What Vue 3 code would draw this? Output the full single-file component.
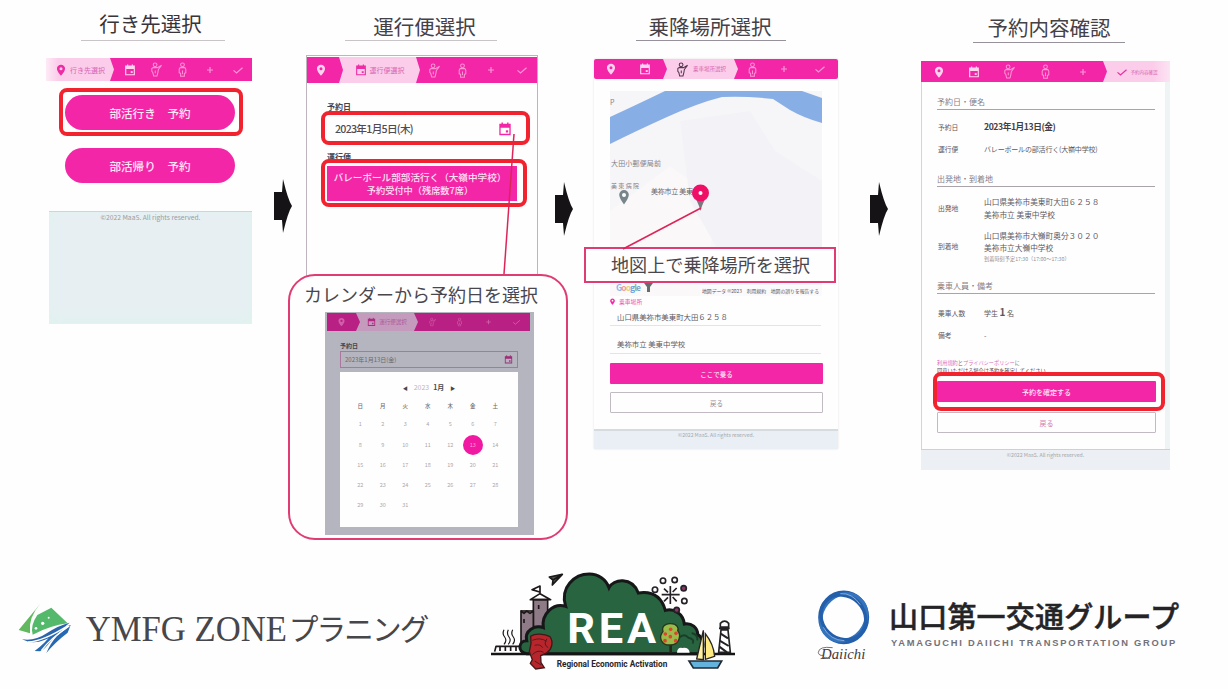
<script setup>
import { h } from 'vue'

const icons = ['pin', 'cal', 'ride', 'man', 'plus', 'check']

// Progress bar on top of every screen; one step is expanded with its label.
const StepBar = (props) =>
  h('div', { class: ['stepbar', props.kind] },
    icons.map((name, i) =>
      h('div', { class: ['cell', i === props.active ? 'on' : ''] }, [
        h('svg', { class: ['ico', name], viewBox: '0 0 16 16' }, [h('use', { href: '#i-' + name })]),
        i === props.active ? h('span', props.label) : null
      ])
    )
  )
StepBar.props = ['kind', 'active', 'label']

const weekdays = ['日', '月', '火', '水', '木', '金', '土']
const days = [1, 2, 3, 4, 5, 6, 7, 8, 9, 10, 11, 12, 13, 14, 15, 16, 17, 18, 19, 20, 21, 22, 23, 24, 25, 26, 27, 28, 29, 30, 31]
const waves = [0, 13, 26]
const fruits = [[572, 208], [556, 222], [588, 220], [571, 230], [555, 242], [587, 242]]
</script>

<template>
  <div class="page">
    <svg class="defs" width="0" height="0">
      <symbol id="i-pin" viewBox="0 0 16 16"><path fill="currentColor" fill-rule="evenodd" d="M8 1C4.8 1 2.6 3.3 2.6 6.2 2.6 10 8 15.5 8 15.5S13.4 10 13.4 6.2C13.4 3.3 11.2 1 8 1Zm0 3.2a2 2 0 1 1 0 4 2 2 0 0 1 0-4Z" /></symbol>
      <symbol id="i-cal" viewBox="0 0 16 16"><path fill="currentColor" fill-rule="evenodd" d="M1.500 2H4V.5h1.600V2h4.800V.5H12V2h2.500v13h-13ZM3 6.500v7h10v-7Z" /><path fill="currentColor" d="M9 9.500h2.600v2.500H9Z" /></symbol>
      <symbol id="i-ride" viewBox="0 0 16 16"><g fill="none" stroke="currentColor" stroke-width="1.100"><circle cx="6.500" cy="3" r="2" /><path d="M4 6h5l4.500-2.500M13.500 3.500 10 8l-.5 3-1 4H5L4 11 3 10V7l1-1" /><path d="M6.700 9v3" /></g></symbol>
      <symbol id="i-man" viewBox="0 0 16 16"><g fill="none" stroke="currentColor" stroke-width="1.100"><circle cx="8" cy="3" r="2" /><path d="M5.500 6h5l1 1.500v4L10 12v3.300H6V12l-1.500-.5v-4Z" /><path d="M8 9v4" /></g></symbol>
      <symbol id="i-plus" viewBox="0 0 16 16"><path fill="none" stroke="currentColor" stroke-width="1.600" d="M8 4v8M4 8h8" /></symbol>
      <symbol id="i-check" viewBox="0 0 16 16"><path fill="none" stroke="currentColor" stroke-width="1.600" d="M2 8.500l4 3.500 8-7" /></symbol>
    </svg>

    <main class="flow">
      <section class="step s1">
        <h2>行き先選択</h2>
        <div class="screen">
          <StepBar kind="b1" :active="0" label="行き先選択" />
          <button class="pill hl"><i></i>部活行き　予約</button>
          <button class="pill">部活帰り　予約</button>
          <div class="foot"><span>©2022 MaaS. All rights reserved.</span></div>
        </div>
      </section>

      <svg class="arrow a1" viewBox="0 0 18 54"><path d="M0 13H8L9 0Q14 21 18 27 14 33 9 54L8 41H0Z" /></svg>

      <section class="step s2">
        <h2>運行便選択</h2>
        <div class="screen">
          <StepBar kind="b2" :active="1" label="運行便選択" />
          <label>予約日</label>
          <div class="date hl"><i></i>2023年1月5日(木)<svg viewBox="0 0 16 16"><use href="#i-cal" /></svg></div>
          <label>運行便</label>
          <button class="bus hl"><i></i><span>バレーボール部部活行く（大嶺中学校）<br><b>予約受付中（残席数7席）</b></span></button>
        </div>
        <div class="callout cal">
          <p>カレンダーから予約日を選択</p>
          <div class="dim">
            <StepBar kind="b5" :active="1" label="運行便選択" />
            <label>予約日</label>
            <div class="dfield">2023年1月13日(金)<svg viewBox="0 0 16 16"><use href="#i-cal" /></svg></div>
            <div class="picker">
              <div class="month"><i>◀</i><span>2023</span><b>1月</b><i>▶</i></div>
              <div class="grid">
                <b v-for="w in weekdays" :key="w">{{ w }}</b>
                <span v-for="d in days" :key="d" :class="{ sel: d === 13 }">{{ d }}</span>
              </div>
            </div>
          </div>
        </div>
        <svg class="lead l1" viewBox="0 0 14 142"><path d="M12 1L2 141" /></svg>
      </section>

      <svg class="arrow a2" viewBox="0 0 18 54"><path d="M0 13H8L9 0Q14 21 18 27 14 33 9 54L8 41H0Z" /></svg>

      <section class="step s3">
        <h2>乗降場所選択</h2>
        <div class="screen">
          <StepBar kind="b3" :active="2" label="乗車場所選択" />
          <svg class="map" viewBox="0 0 212 205">
            <rect width="212" height="205" fill="#f6f5f8" />
            <path d="M0 120L60 75 110 110 90 205H0Z" fill="#faf8f8" />
            <path d="M70 30L140 20 165 60 212 90V160L120 180 80 110Z" fill="#f3f3f7" />
            <path d="M0 26Q26 14 55 0H192L212 7V32Q194 27 180 19L163 8Q137 5 112 6 88 12 57 26T0 53Z" fill="#88aee6" />
            <g fill="#85828a" font-size="7">
              <text x="0" y="14">P</text>
              <text x="1" y="75" textLength="50">大田小郵便局前</text>
              <text x="1" y="97" font-size="6" textLength="28">美東病院</text>
              <text x="41" y="103" fill="#68646c" textLength="42">美祢市立 美東</text>
            </g>
            <path d="M14 99a4.800 4.800 0 0 1 4.800 4.800Q18.800 107 14 113.500 9.200 107 9.200 103.800A4.800 4.800 0 0 1 14 99Z" fill="#77868c" /><circle cx="14" cy="104" r="2" fill="#fff" />
            <path d="M86 108h9l-3 7-1.500 5-1.500-5Z" fill="#7c7880" />
            <circle cx="90.500" cy="102" r="8.500" fill="#ef0f66" /><circle cx="90.500" cy="102" r="2" fill="#fff" />
            <g font-size="8.500" font-weight="bold" transform="translate(6 200)"><text textLength="25"><tspan fill="#8bb4ee">G</tspan><tspan fill="#ef9b9b">o</tspan><tspan fill="#e8cf75">o</tspan><tspan fill="#6e9fe2">g</tspan><tspan fill="#77bf8a">l</tspan><tspan fill="#7ca3c8">e</tspan></text></g>
            <path d="M34 192h9l-3 4v5h-3v-5Z" fill="#666b6b" />
            <rect x="90" y="194" width="122" height="11" fill="#faf9fb" />
            <text x="92" y="202" font-size="5" fill="#5c5760" textLength="117" lengthAdjust="spacingAndGlyphs">地図データ ©2023　利用規約　地図の誤りを報告する</text>
          </svg>
          <div class="from"><svg viewBox="0 0 16 16"><use href="#i-pin" /></svg>乗車場所</div>
          <div class="field f1">山口県美祢市美東町大田６２５８</div>
          <div class="field f2">美祢市立 美東中学校</div>
          <button class="solid">ここで乗る</button>
          <button class="line">戻る</button>
          <div class="foot"><span>©2022 MaaS. All rights reserved.</span></div>
        </div>
        <div class="callout place">地図上で乗降場所を選択</div>
        <svg class="lead l2" viewBox="0 0 80 43"><path d="M79 1L1 42" /></svg>
      </section>

      <svg class="arrow a3" viewBox="0 0 18 54"><path d="M0 13H8L9 0Q14 21 18 27 14 33 9 54L8 41H0Z" /></svg>

      <section class="step s4">
        <h2>予約内容確認</h2>
        <div class="screen">
          <StepBar kind="b4" :active="5" label="予約内容確認" />
          <div class="body">
            <h3>予約日・便名</h3>
            <dl class="d1"><dt>予約日</dt><dd class="strong">2023年1月13日(金)</dd></dl>
            <dl class="d2"><dt>運行便</dt><dd class="tight">バレーボールの部活行く(大嶺中学校)</dd></dl>
            <h3 class="h2nd">出発地・到着地</h3>
            <dl class="d3"><dt>出発地</dt><dd>山口県美祢市美東町大田６２５８<br>美祢市立 美東中学校</dd></dl>
            <dl class="d4"><dt>到着地</dt><dd>山口県美祢市大嶺町奥分３０２０<br>美祢市立大嶺中学校<small>到着時刻予定17:30（17:00〜17:30）</small></dd></dl>
            <h3 class="h3rd">乗車人員・備考</h3>
            <dl class="d5"><dt>乗車人数</dt><dd>学生 <b>1</b> 名</dd></dl>
            <dl class="d6"><dt>備考</dt><dd>-</dd></dl>
            <p class="terms"><a>利用規約</a>と<a>プライバシーポリシー</a>に<br><em>同意いただける場合は予約を確定してください。</em></p>
            <button class="solid hl"><i></i>予約を確定する</button>
            <button class="line">戻る</button>
          </div>
          <div class="foot"><span>©2022 MaaS. All rights reserved.</span></div>
        </div>
      </section>
    </main>

    <footer class="logos">
      <svg class="ymfg" viewBox="0 0 1350 327">
        <path d="M56 150L122 70Q84 112 90 160L64 152Z" fill="#61b85f" />
        <path d="M154 83L203 130Q150 137 98 164 90 137 112 105Z" fill="#55b96b" />
        <g fill="#fff"><circle cx="128" cy="130" r="5" /><circle cx="146" cy="113" r="3" /><circle cx="108" cy="145" r="4" /></g>
        <path d="M66 178Q105 184 140 160T209 128Q165 168 133 180 98 195 66 178Z" fill="#2b64ab" />
        <path d="M104 213Q137 188 150 168 181 137 213 135 171 157 151 185 133 209 120 214Z" fill="#2569b4" />
        <path d="M139 219Q151 190 171 168L212 135 203 158Q165 187 139 219Z" fill="#2569b4" />
        <path d="M84 186Q130 184 205 136M124 212Q150 176 208 138" fill="none" stroke="#fff" stroke-width="4" />
        <g fill="#46464b"><text x="257" y="183" class="serif" font-size="108" textLength="604" lengthAdjust="spacingAndGlyphs">YMFG ZONE</text><text x="866" y="181" font-size="89" textLength="422">プラニング</text></g>
      </svg>

      <svg class="rea" viewBox="0 0 810 387">
        <g fill="none" stroke="#1c1718" stroke-width="5" stroke-linejoin="round">
          <g fill="#8e7b87"><path d="M160 119V200H203V119Z" /><path d="M123 153V255H160V153L150 160 140 153 132 160Z" /></g>
          <path d="M151 119L180 101 212 119ZM180 101V78L156 89 179 96M132 177v12M176 135v12" />
          <path d="M122 153h40" />
          <path d="M208 51L247 43 217 75 219 60ZM247 43L219 60" fill="#48604f" />
          <path v-for="w in waves" :key="w" :d="`M${72 + w} 209q-6 12 2 22t-2 22`" stroke-width="3.500" />
          <path d="M44 275l4-16H135V275M60 259v14M76 259v14M92 259v14M108 259v14M124 259v14" />
        </g>
        <path d="M140 281C110 274 116 242 140 242 133 211 164 194 190 203 184 162 220 127 257 139 239 81 284 42 328 42 355 42 378 58 387 83 399 57 456 49 475 99 502 95 541 98 556 151 582 144 610 161 613 192 635 188 653 203 653 223 675 238 673 269 657 281Z" fill="#28643f" stroke="#161718" stroke-width="9" />
        <path d="M33 282H765" stroke="#151516" stroke-width="7" />
        <text class="reatext" fill="#fff" x="262" y="250" font-size="130" font-weight="bold" textLength="266">REA</text>
        <path d="M152 229C165 219 193 221 210 230 221 246 216 268 201 278L182 287 183 308 193 323 167 327 151 310 157 299 148 275 153 250Z" fill="#b8262b" stroke="#441719" stroke-width="4" />
        <path d="M157 241q24-10 43 3M164 256q17-5 24 7m13-27q-13 18 4 27M157 284q17-17 34-7M164 303l19 12" fill="none" stroke="#541c20" stroke-width="3" />
        <path d="M572 278V250" stroke="#29251b" stroke-width="8" />
        <path d="M572 191C592 191 597 205 593 212 606 228 596 255 572 255 542 257 535 230 549 215 544 199 557 190 572 191Z" fill="#9abd4a" stroke="#26351d" stroke-width="4" />
        <circle v-for="(f, n) in fruits" :key="n" :cx="f[0]" :cy="f[1]" r="5.500" fill="#df4430" />
        <path d="M591 278q1-17 16-14 20-3 22 14Z" fill="#fff" />
        <path d="M598 233q15-15 27 0 20 4 13 18M635 219q20 5 17 22" fill="none" stroke="#193e29" stroke-width="6" />
        <g fill="none" stroke="#242127" stroke-width="5">
          <path d="M571 78v17M571 113v19M545 104h17M580 104h19M552 86l12 11M578 111l12 13M552 124l12-12M578 96l12-12M571 95v18M562 104h18" />
          <circle cx="549" cy="62" r="8" /><circle cx="584" cy="60" r="8" /><circle cx="611" cy="85" r="8" fill="#8e3568" /><circle cx="613" cy="123" r="8" /><circle cx="525" cy="89" r="8" /><circle cx="590" cy="150" r="8" fill="#8e3568" />
        </g>
        <path d="M670 211V299L650 297Z" fill="#fff1a0" stroke="#262324" stroke-width="4" />
        <path d="M676 221Q701 253 704 289L676 298Z" fill="#ffeb82" stroke="#262324" stroke-width="4" />
        <path d="M627 303H725L713 324H640Z" fill="#63b3dc" stroke="#202c35" stroke-width="5" />
        <path d="M723 210H744L751 277H716ZM717 205h32M721 201V190q13-13 25 0v11Z" fill="#fff" stroke="#242124" stroke-width="5" />
        <path d="M722 221l22 14M719 242l27 16M718 260l23 17" stroke="#242124" stroke-width="6" />
        <text x="230" y="322" font-size="25" font-weight="bold" fill="#292629" class="reatext" textLength="332" lengthAdjust="spacingAndGlyphs">Regional Economic Activation</text>
      </svg>

      <svg class="daiichi" viewBox="0 0 1200 330">
        <g fill="none" stroke="#245fac">
          <ellipse cx="131" cy="142" rx="70" ry="74" stroke-width="13" />
          <ellipse cx="131" cy="142" rx="65" ry="74" stroke-width="10" transform="rotate(40 131 142)" stroke="#3474be" />
          <ellipse cx="130" cy="142" rx="63" ry="71" stroke-width="10" transform="rotate(-45 130 142)" />
        </g>
        <path d="M121 71q35-3 60 33M70 172q21 39 63 40" fill="none" stroke="#9bbce2" stroke-width="2.500" />
        <text x="63" y="266" class="script" font-size="43" textLength="133" lengthAdjust="spacingAndGlyphs" fill="#3e3a41">Daiichi</text>
        <path d="M98 233Q57 228 55 247 56 258 70 256M62 266q14-8 28 0" fill="none" stroke="#5b555b" stroke-width="2.500" />
        <text x="267" y="174" font-size="87" font-weight="500" textLength="870" fill="#242427" stroke="#242427" stroke-width="1.500">山口第一交通グループ</text>
        <text x="273" y="227" class="latin" font-size="28" font-weight="bold" textLength="853" fill="#737177">YAMAGUCHI DAIICHI TRANSPORTATION GROUP</text>
      </svg>
    </footer>
  </div>
</template>

<style>
html, body { margin: 0; background: #fffefe; overflow: hidden; }
.stepbar { display: grid; background: #f426a8; color: #ffd3ef; flex: none; box-sizing: border-box; }
.stepbar .cell { display: flex; align-items: center; justify-content: center; min-width: 0; white-space: nowrap; }
.stepbar .ico { width: 12px; height: 12px; flex: none; opacity: .65; }
.stepbar .pin, .stepbar .cal, .stepbar .on .ico { opacity: 1; }
.stepbar .ride, .stepbar .man { width: 15px; height: 17px; }
.stepbar .on { background: #fbcdea; color: #ee2ca4; gap: 3px; clip-path: polygon(0 0, calc(100% - 4px) 0, 100% 50%, calc(100% - 4px) 100%, 0 100%, 4px 50%); }
.stepbar .on span { font-size: 7px; color: #d965b1; }
.b1 { height: 23px; grid-template-columns: 68px 31px 23px 28px 28px 28px; }
.b1 .on { clip-path: polygon(0 0, calc(100% - 4px) 0, 100% 50%, calc(100% - 4px) 100%, 0 100%); background: linear-gradient(90deg, #fdebf6, #fbcdea 12px); }
.b2 { height: 26px; grid-template-columns: 32px 81px 28px 28px 30px 31px; }
.b2 .pin { margin-right: 4px; }
.b3 { height: 20px; grid-template-columns: 33px 36px 75px 28px 35px 37px; border-radius: 2px; }
.b3 .on span { font-size: 5.500px; }
.b3 .on .ico { color: #50354b; opacity: 1; }
.b4 { height: 21px; grid-template-columns: 35px 36px 35px 36px 40px 67px; }
.b4 .on span { font-size: 4.500px; }
.b4 .on { clip-path: polygon(0 0, 100% 0, 100% 100%, 0 100%, 4px 50%); background: linear-gradient(90deg, #fbcdea 75%, #fbe4f3); }
.b5 { height: 18px; grid-template-columns: 29px 62px 28px 27px 30px 27px; background: #b92084 !important; }
.b5 .ico { width: 9px !important; height: 10px !important; opacity: .35 !important; }
.b5 .on { background: #c49abd; color: #b11d7a; }
.b5 .on .ico { opacity: .9 !important; }
.b5 .on span { font-size: 5.500px; color: #ad5b99; }
</style>

<style scoped>
.page { width: 1228px; height: 689px; background: #fffefe; font-family: "Noto Sans CJK JP", sans-serif; color: #48454a; overflow: hidden; }
.defs { position: absolute; }
button { font: inherit; padding: 0; margin: 0; border: 0; display: block; box-sizing: border-box; text-align: center; }
h2, h3, p, dl, dd { margin: 0; }
.flow { display: flex; height: 560px; }
.step { position: relative; flex: none; }
.s1 { width: 206px; margin-left: 46px; }
.s2 { width: 232px; margin-left: 14px; }
.s3 { width: 244px; margin-left: 20px; }
.s4 { width: 249px; margin-left: 32px; }
h2 { font-size: 20.500px; font-weight: 400; text-align: center; line-height: 30px; box-sizing: border-box; height: 32px; margin: 9px auto 0; border-bottom: 1px solid #c9c4c8; white-space: nowrap; color: #444147; }
.s1 h2 { width: 144px; margin-left: 35px; padding-right: 5px; line-height: 28px; color: #38343a; }
.s2 h2 { width: 152px; margin-left: 39px; padding-left: 7px; line-height: 34px; }
.s3 h2 { width: 150px; margin-left: 42px; padding-right: 2px; line-height: 34px; border-color: #96919a; }
.s4 h2 { width: 152px; margin-left: 52px; height: 34px; line-height: 37px; border-color: #96919a; }
.arrow { width: 18px; height: 54px; flex: none; fill: #151316; }
.a1 { margin: 179px 0 0 22px; }
.a2 { margin: 182px 0 0 18px; }
.a3 { margin: 182px 0 0 33px; }
.a2, .a3 { transform: translateX(-1px); }
.hl { position: relative; }
.hl i { position: absolute; border: 4px solid #f0232f; border-radius: 8px; box-sizing: border-box; }
.foot { text-align: center; color: #a5a7ab; white-space: nowrap; }

.s1 .screen { margin-top: 17px; display: flex; flex-direction: column; }
.pill { width: 170px; height: 35px; border-radius: 18px; background: #f426a8; color: #ffe7f8; font-size: 11.600px; font-weight: 500; margin: 18px 0 0 19px; }
.pill.hl { margin-top: 14px; }
.pill i { left: -6px; top: -7px; width: 184px; height: 48px; }
.s1 .foot { margin: 28px 0 0 3px; height: 112px; background: #e7eff3; border-top: 1px solid #cbd7d5; box-shadow: inset 0 -4px 14px #dff3ee; font-size: 6.700px; line-height: 10px; color: #999da0; }

.s2 .screen { margin-top: 14px; height: 221px; box-sizing: border-box; border: 1px solid #bdb4be; border-bottom: 0; padding-top: 1px; }
.s2 label { display: block; font-size: 8px; line-height: 10px; font-weight: 700; color: #49434a; margin: 19px 0 0 20px; }
.date { height: 29px; line-height: 29px; margin: 2px 10px 0 28px; font-size: 10.700px; letter-spacing: -.75px; font-weight: 500; color: #514b51; display: flex; justify-content: space-between; align-items: center; }
.date svg { width: 14px; height: 14px; color: #f426a8; margin-right: 15px; }
.date i { left: -14px; top: -3px; width: 209px; height: 34px; }
.s2 .date + label { margin-top: 9px; }
.bus { width: 190px; height: 35px; background: #f426a8; color: #ffe0f5; font-size: 9.600px; line-height: 12.500px; font-weight: 500; margin: 4px 0 0 20px; white-space: nowrap; }
.bus span { display: block; margin-left: -4px; }
.bus b { font-weight: 500; font-size: 9.200px; }
.bus i { left: -6px; top: -7px; width: 206px; height: 48px; }
.lead { position: absolute; fill: none; stroke: #dd2458; stroke-width: 1.500; }
.l1 { left: 196px; top: 133px; width: 14px; height: 142px; }
.callout { position: absolute; box-sizing: border-box; background: #fffefe; border: 2px solid #df3c74; color: #4a474c; white-space: nowrap; }
.cal { left: -18px; top: 274px; width: 280px; height: 266px; border-radius: 27px; }
.cal p { font-size: 18px; line-height: 24px; margin: 6px 0 0 14px; }
.dim { width: 209px; height: 223px; margin: 6px 0 0 35px; background: #b4b5be; padding: 1px 4px 0 2px; box-sizing: border-box; }
.s2 .dim label { font-size: 6px; line-height: 8px; margin: 11px 0 0 13px; }
.dfield { width: 178px; height: 17px; box-sizing: border-box; border: 1px solid #ab779f; margin: 1px 0 0 13px; font-size: 6px; color: #6b6670; display: flex; justify-content: space-between; align-items: center; padding: 0 4px; }
.dfield svg { width: 9px; height: 9px; color: #a22a7b; }
.picker { width: 178px; height: 155px; margin: 4px 0 0 13px; background: #fffefe; }
.month { display: flex; justify-content: center; align-items: center; gap: 4px; padding-top: 9px; height: 12px; font-size: 7px; }
.month i { font-style: normal; font-size: 5px; margin: 0 2px; }
.month span { color: #bcb4bc; }
.grid { display: grid; grid-template-columns: repeat(7, 22.500px); grid-template-rows: 17px 20px 21px repeat(3, 20px); margin: 4px 0 0 9px; font-size: 5.500px; color: #aaa7ac; align-items: center; justify-items: center; }
.grid b { color: #716e73; font-weight: 500; }
.grid .sel { width: 20px; height: 20px; border-radius: 50%; background: #f119a1; color: #ff9bdc; line-height: 20px; text-align: center; }

.s3 .screen { margin-top: 18px; box-shadow: 0 0 2px #e5e0e6; }
.map { display: block; width: 212px; height: 205px; margin: 12px 0 0 16px; }
.map text { font-family: "Noto Sans CJK JP", sans-serif; }
.from { display: flex; align-items: center; gap: 3px; margin: 0 0 0 15px; height: 10px; font-size: 5.800px; color: #ed4daf; }
.from svg { width: 7px; height: 9px; color: #f426a8; }
.field { width: 204px; margin-left: 16px; padding-left: 7px; font-size: 7.400px; border-bottom: 1px solid #eeddea; white-space: nowrap; color: #5d595f; }
.f1 { height: 19px; line-height: 22px; }
.f2 { height: 27px; line-height: 36px; }
.solid { background: #f426a8; color: #ffe5f7; font-weight: 500; border-radius: 1px; }
.line { border: 1px solid #c2bac2; background: #fffefe; color: #9a8796; border-radius: 1px; }
.s3 .solid, .s3 .line { width: 213px; height: 21px; margin-left: 16px; font-size: 6.500px; }
.s3 .solid { margin-top: 9px; }
.s3 .line { margin-top: 8px; }
.s3 .foot { margin-top: 16px; height: 20px; background: #e9eff5; border-top: 2px solid #d6dbde; box-sizing: border-box; font-size: 5.100px; line-height: 8px; }
.place { left: -10px; top: 247px; width: 252px; height: 36px; font-size: 18.100px; line-height: 31px; padding-left: 25px; }
.l2 { left: 28px; top: 207px; width: 80px; height: 43px; }

.s4 .screen { margin-top: 18px; }
.body { height: 367px; box-sizing: border-box; padding: 14px 15px 0 16px; border-left: 1px solid #d8d3da; border-right: 5px solid #eef3f3; }
h3 { font-size: 8px; font-weight: 400; line-height: 12px; height: 13px; border-bottom: 1px solid #aba3aa; color: #858087; width: 218px; margin-left: -1px; }
dl { display: grid; grid-template-columns: 47px 1fr; align-items: center; font-size: 7px; line-height: 12px; white-space: nowrap; color: #5c585e; }
dt { font-size: 6.800px; }
dd { margin-left: -1px; }
.tight { letter-spacing: -.18px; }
.strong { font-size: 8.700px; letter-spacing: -.45px; font-weight: 700; color: #434045; }
.d1 { margin-top: 11px; }
.d2 { margin-top: 10px; }
.h2nd { margin-top: 18px; }
.d3 { margin-top: 8px; line-height: 13px; font-size: 7.700px; }
.d4 { margin-top: 9px; line-height: 11.500px; font-size: 7.700px; }
small { display: block; font-size: 5.200px; color: #938e94; line-height: 11px; }
.h3rd { margin-top: 16px; }
.d5 { margin-top: 12px; }
.d5 b { font-size: 10px; }
.d6 { margin-top: 10px; }
.terms { font-size: 5.200px; line-height: 8px; margin: 18px 0 0 -1px; color: #716771; white-space: nowrap; }
.terms a { color: #dd6dba; }
.terms em { font-style: normal; color: #4f484f; }
.s4 .solid, .s4 .line { width: 219px; height: 21px; margin-left: -1px; font-size: 7px; }
.s4 .solid { margin-top: 6px; }
.s4 .line { margin-top: 10px; color: #d678ab; }
.s4 .solid i { left: -4px; top: -9px; width: 232px; height: 39px; }
.s4 .foot { height: 21px; box-sizing: border-box; background: #eceff3; border-top: 1px solid #d0d0d4; font-size: 5.200px; line-height: 9px; }

.logos { display: flex; height: 129px; }
.logos svg { flex: none; font-family: "Noto Sans CJK JP", sans-serif; }
.ymfg { width: 450px; height: 109px; margin-top: 20px; }
.rea { width: 270px; height: 129px; margin-left: 30px; }
.daiichi { width: 400px; height: 110px; margin: 10px 0 0 50px; }
.serif { font-family: "Liberation Serif", serif; }
.reatext { font-family: "Roboto", sans-serif; }
.script { font-family: "Liberation Serif", serif; font-style: italic; }
.latin { font-family: "Liberation Sans", sans-serif; }
</style>
